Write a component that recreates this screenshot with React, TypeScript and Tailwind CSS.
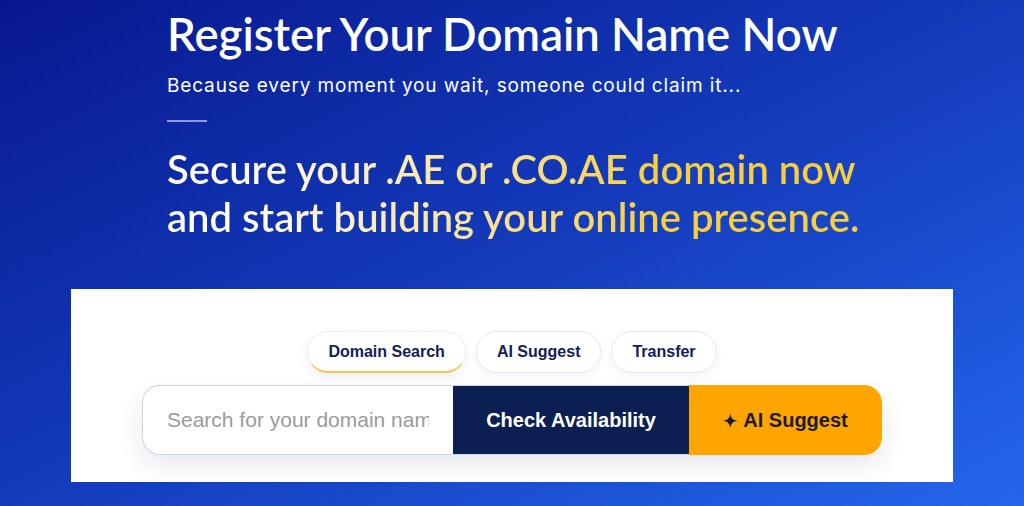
import React from "react";

export default function App() {
  return (
    <div className="w-[1024px] h-[506px] overflow-hidden bg-linear-to-br from-[#09178f] via-[#143bbb] to-[#2566ec] flex flex-col items-center">
      <div className="w-[690px] pt-[6px]" style={{ fontFamily: "Lato, 'Open Sans', sans-serif" }}>
        <h1 className="text-[45.5px] leading-[56px] font-semibold text-white whitespace-nowrap">
          Register Your Domain Name Now
        </h1>
        <p
          className="mt-[11px] text-[19px] leading-[26px] text-white tracking-[0.045em]"
          style={{ fontFamily: "Inter, 'Noto Sans', sans-serif" }}
        >
          Because every moment you wait, someone could claim it...
        </p>
        <div className="mt-[21px] w-[40px] h-[2px] bg-[#8d9bd3]" />
        <h2 className="mt-[23px] text-[40px] leading-[48px] font-semibold whitespace-nowrap">
          <span className="inline-block bg-linear-to-r from-white from-5% to-[#f5cf3f] to-70% bg-clip-text text-transparent">
            Secure your .AE or .CO.AE domain now
            <br />
            and start building your online presence.
          </span>
        </h2>
      </div>

      <div
        className="mt-[48px] w-[882px] bg-white flex flex-col items-center pt-[42px] pb-[27px]"
        style={{ fontFamily: "'Liberation Sans', Arial, sans-serif" }}
      >
        <div className="flex gap-[10px]">
          <button className="h-[42px] px-[20px] rounded-full bg-white border border-[#eceef5] border-b-2 border-b-[#f2c75a] shadow-[0_4px_10px_rgba(20,32,86,0.08)] text-[16px] font-bold text-[#142056]">
            Domain Search
          </button>
          <button className="h-[42px] px-[20px] rounded-full bg-white border border-[#e6e9f2] shadow-[0_3px_8px_rgba(20,32,86,0.05)] text-[16px] font-bold text-[#142056]">
            AI Suggest
          </button>
          <button className="h-[42px] px-[20px] rounded-full bg-white border border-[#e6e9f2] shadow-[0_3px_8px_rgba(20,32,86,0.05)] text-[16px] font-bold text-[#142056]">
            Transfer
          </button>
        </div>

        <div className="mt-[12px] flex h-[70px] w-[740px] rounded-[18px] shadow-[0_10px_24px_rgba(20,32,86,0.10)]">
          <div className="w-[311px] h-full rounded-l-[18px] border border-r-0 border-[#cdd4ec] bg-white flex items-center">
            <input
              className="w-full h-full bg-transparent outline-none px-[24px] text-[21px] text-[#333] placeholder:text-[#9b9b9b]"
              placeholder="Search for your domain name"
            />
          </div>
          <button className="w-[236px] h-full bg-[#0b1f52] border-t border-b border-[#cdd4ec] text-white text-[20px] font-bold">
            Check Availability
          </button>
          <button className="w-[193px] h-full bg-[#ffa502] rounded-r-[18px] text-[#1a1b2e] text-[20px] font-bold">
            <span className="text-[17px] mr-[6px]">✦</span>AI Suggest
          </button>
        </div>
      </div>
    </div>
  );
}
